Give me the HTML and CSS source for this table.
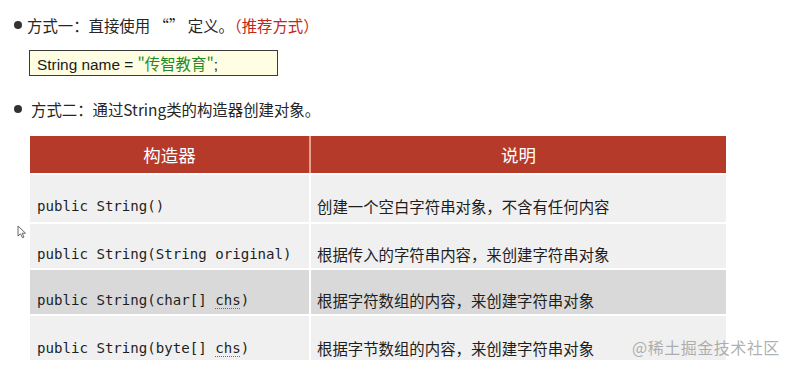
FILE: index.html
```html
<!DOCTYPE html>
<html lang="zh">
<head>
<meta charset="utf-8">
<link rel="stylesheet" href="styles.css">
</head>
<body>
<div class="page">
  <div class="bullet-line first">
    <span class="dot"></span>
    <span class="txt">方式一：直接使用 “” 定义。<span class="red">（推荐方式）</span></span>
  </div>
  <div class="code-box">String name = <span class="green">"传智教育"</span>;</div>
  <div class="bullet-line second">
    <span class="dot"></span>
    <span class="txt">方式二：通过String类的构造器创建对象。</span>
  </div>
  <div class="table">
    <div class="th">构造器</div>
    <div class="th">说明</div>
    <div class="td mono r1"><span>public String()</span></div>
    <div class="td cn r1"><span>创建一个空白字符串对象，不含有任何内容</span></div>
    <div class="td mono r2"><span>public String(String original)</span></div>
    <div class="td cn r2"><span>根据传入的字符串内容，来创建字符串对象</span></div>
    <div class="td mono r3"><span>public String(char[] <span class="squig">chs</span>)</span></div>
    <div class="td cn r3"><span>根据字符数组的内容，来创建字符串对象</span></div>
    <div class="td mono r4"><span>public String(byte[] <span class="squig">chs</span>)</span></div>
    <div class="td cn r4"><span>根据字节数组的内容，来创建字符串对象</span></div>
  </div>
  <svg class="cursor" width="10" height="14" viewBox="0 0 10 14"><path d="M1 1 L1 11 L3.5 8.8 L5.5 12.8 L7 12 L5.2 8.2 L8.5 8.2 Z" fill="#fff" stroke="#555" stroke-width="0.9" stroke-linejoin="round"/></svg>
  <div class="watermark">@稀土掘金技术社区</div>
</div>
</body>
</html>
```
FILE: styles.css
```css
html, body {
  margin: 0;
  padding: 0;
  background: #fff;
}
.page {
  position: relative;
  width: 794px;
  height: 370px;
  padding-top: 15px;
  box-sizing: border-box;
  font-family: "Noto Sans CJK SC", "Liberation Sans", sans-serif;
  color: #262626;
}
.bullet-line {
  display: flex;
  align-items: center;
  height: 20px;
  font-size: 15.4px;
  line-height: 20px;
}
.bullet-line.first {
  padding-left: 14px;
}
.bullet-line.first .dot {
  margin-right: 5px;
}
.bullet-line.second {
  margin-top: 23px;
  padding-left: 14px;
}
.bullet-line.second .dot {
  margin-right: 9px;
}
.dot {
  width: 8px;
  height: 8px;
  border-radius: 50%;
  background: #333;
  flex: none;
}
.red {
  color: #c0281c;
}
.code-box {
  margin: 15px 0 0 29px;
  width: 249px;
  height: 26px;
  box-sizing: border-box;
  border: 1px solid #3a3a3a;
  background: #fffee2;
  font-family: "Liberation Sans", "Noto Sans CJK SC", sans-serif;
  font-size: 15.4px;
  line-height: 24px;
  padding-left: 7px;
  color: #1a1a1a;
}
.green {
  color: #1f8a2a;
  font-family: "Noto Sans CJK SC", sans-serif;
}
.table {
  margin: 17px 0 0 30px;
  width: 696px;
  display: grid;
  grid-template-columns: 279px 415px;
  column-gap: 2px;
  row-gap: 2px;
  grid-template-rows: 37px 47px 44px 44px 44px;
  background: #fff;
}
.th {
  background: #b63a29;
  color: #fff;
  font-size: 17.5px;
  display: flex;
  align-items: center;
  justify-content: center;
  line-height: 20px;
}
.th:first-child {
  box-shadow: 2px 0 0 #e6a08f;
}
.td {
  display: flex;
  align-items: flex-end;
  padding-bottom: 4px;
  box-sizing: border-box;
  background: #f0f0f0;
  color: #1e1e1e;
  line-height: 20px;
  white-space: pre;
}
.td.r1 { padding-bottom: 6px; }
.td.r4 { padding-bottom: 2px; }
.td.r3 {
  background: #d9d9d9;
}
.mono {
  font-family: "DejaVu Sans Mono", "Liberation Mono", monospace;
  font-size: 14.1px;
  padding-left: 7px;
}
.cn {
  font-size: 15.4px;
  padding-left: 6px;
  font-family: "Noto Sans CJK SC", sans-serif;
}
.squig {
  text-decoration: underline dotted #d64040;
  text-decoration-thickness: 1px;
  text-underline-offset: 3px;
}
.cursor {
  position: absolute;
  left: 17px;
  top: 225px;
}
.watermark {
  position: absolute;
  left: 632px;
  top: 337px;
  font-size: 16px;
  line-height: 20px;
  color: rgba(150, 150, 150, 0.75);
  font-family: "Noto Sans CJK SC", sans-serif;
  letter-spacing: 0.5px;
}
```
